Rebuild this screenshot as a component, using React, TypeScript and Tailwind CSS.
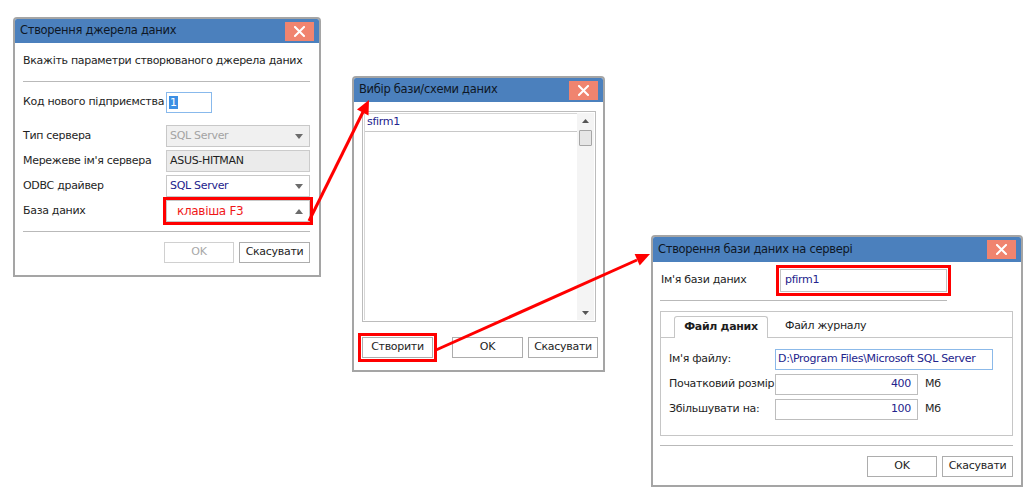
import React from "react"

interface WindowProps {
    className: string
    title: string
    titleHeight?: string
    children?: React.ReactNode
}

function CloseButton() {
    return (
        <div className="flex h-[19px] w-[29px] items-center justify-center bg-[#f0846f]">
            <svg width="11" height="11" viewBox="0 0 11 11">
                <path d="M1 1 L10 10 M10 1 L1 10" stroke="#ffffff" strokeWidth="2" strokeLinecap="square" />
            </svg>
        </div>
    )
}

function Window({ className, title, titleHeight = "h-[24px]", children }: WindowProps) {
    return (
        <div className={`absolute flex flex-col rounded-t-[4px] border-2 border-[#a5a5a5] bg-white ${className}`}>
            <div className={`flex ${titleHeight} items-center justify-between rounded-t-[2px] bg-[#4b80bd] pl-[5px] pr-[5px] text-[11.5px] text-[#0e1726]`}>
                <span>{title}</span>
                <CloseButton />
            </div>
            {children}
        </div>
    )
}

function Arrow({ dir }: { dir: "down" | "up" }) {
    return (
        <svg width="8" height="5" viewBox="0 0 8 5" className="shrink-0">
            {dir === "down"
                ? <path d="M0 0 H8 L4 5 Z" fill="#6b6b6b" />
                : <path d="M0 5 H8 L4 0 Z" fill="#6b6b6b" />}
        </svg>
    )
}

function Button({ label, disabled, width = "w-[71px]", className = "" }: { label: string, disabled?: boolean, width?: string, className?: string }) {
    return (
        <div className={`flex h-[21px] ${width} items-center justify-center border ${disabled ? "border-[#d0d0d0] text-[#a8a8a8]" : "border-[#adadad] text-[#1e1e1e]"} bg-white ${className}`}>
            {label}
        </div>
    )
}

function SourceDialog() {
    return (
        <Window className="left-[13px] top-[17px] h-[260px] w-[308px]" title="Створення джерела даних">
            <div className="flex flex-col pl-[8px] pr-[9px]">
                <div className="mt-[11px] whitespace-nowrap leading-[13px]">Вкажіть параметри створюваного джерела даних</div>
                <div className="mt-[14px] h-px bg-[#b9b9b9]" />
                <div className="mt-[10px] flex h-[21px] items-center">
                    <span className="w-[143px] whitespace-nowrap">Код нового підприємства</span>
                    <div className="flex h-[21px] w-[46px] items-center border border-[#88b9ec] pl-[2px]">
                        <span className="bg-[#3b8fe4] px-px leading-[13px] text-white">1</span>
                    </div>
                </div>
                <div className="mt-[12px] flex flex-col gap-[3px]">
                    <div className="flex h-[22px] items-center">
                        <span className="w-[143px]">Тип сервера</span>
                        <div className="flex h-[22px] flex-1 items-center justify-between border border-[#c8c8c8] bg-[#f0f0f0] pl-[3px] pr-[6px] text-[#a3a3a3]">
                            <span>SQL Server</span>
                            <Arrow dir="down" />
                        </div>
                    </div>
                    <div className="flex h-[22px] items-center">
                        <span className="w-[143px] whitespace-nowrap">Мережеве ім'я сервера</span>
                        <div className="flex h-[22px] flex-1 items-center border border-[#cbcbcb] bg-[#ebebeb] pl-[3px] text-[#1e1e1e]">
                            <span>ASUS-HITMAN</span>
                        </div>
                    </div>
                    <div className="flex h-[22px] items-center">
                        <span className="w-[143px]">ODBC драйвер</span>
                        <div className="flex h-[22px] flex-1 items-center justify-between border border-[#c8c8c8] bg-white pl-[3px] pr-[6px] text-[#23238c]">
                            <span>SQL Server</span>
                            <Arrow dir="down" />
                        </div>
                    </div>
                    <div className="flex h-[22px] items-center">
                        <span className="w-[143px]">База даних</span>
                        <div className="flex h-[22px] flex-1 items-center justify-between border border-[#c8c8c8] bg-white pl-[10px] pr-[6px] text-[12px] text-[#f01818] outline-[3px] outline-offset-0 outline-[#ff0000] outline-solid">
                            <span>клавіша F3</span>
                            <Arrow dir="up" />
                        </div>
                    </div>
                </div>
                <div className="mt-[9px] h-px bg-[#b9b9b9]" />
                <div className="mt-[10px] flex justify-end gap-[5px]">
                    <Button label="OK" disabled width="w-[70px]" />
                    <Button label="Скасувати" width="w-[71px]" />
                </div>
            </div>
        </Window>
    )
}

function SchemaDialog() {
    return (
        <Window className="left-[352px] top-[76px] h-[296px] w-[253px]" title="Вибір бази/схеми даних">
            <div className="ml-[8px] mr-[7px] mt-[9px] flex h-[211px] border border-[#bcbcbc] p-px">
                <div className="flex flex-1 flex-col border-l border-t border-[#d6d6d6]">
                    <div className="flex h-[18px] items-center border-b border-[#c8c8c8] pl-[2px] text-[#23238c]">sfirm1</div>
                </div>
                <div className="flex w-[17px] flex-col items-center justify-between bg-[#f4f4f4] pb-[5px] pt-[6px]">
                    <div className="flex flex-col items-center gap-[7px]">
                        <svg width="7" height="4" viewBox="0 0 7 4"><path d="M0 4 H7 L3.5 0 Z" fill="#555" /></svg>
                        <div className="h-[16px] w-[13px] rounded-[1px] border border-[#a6a6a6] bg-[#e6e6e6]" />
                    </div>
                    <svg width="7" height="4" viewBox="0 0 7 4"><path d="M0 0 H7 L3.5 4 Z" fill="#555" /></svg>
                </div>
            </div>
            <div className="mt-[15px] flex">
                <Button label="Створити" className="ml-[8px] outline-[3px] outline-offset-[1px] outline-[#ff0000] outline-solid" />
                <Button label="OK" className="ml-[19px]" />
                <Button label="Скасувати" width="w-[70px]" className="ml-[5px]" />
            </div>
        </Window>
    )
}

function ServerDialog() {
    return (
        <Window className="left-[651px] top-[235px] h-[252px] w-[372px]" title="Створення бази даних на сервері" titleHeight="h-[25px]">
            <div className="flex flex-col pl-[7px] pr-[8px]">
                <div className="mt-[7px] flex h-[23px] items-center">
                    <span className="w-[120px] pl-px">Ім'я бази даних</span>
                    <div className="flex h-[23px] w-[167px] items-center border border-[#c3c3c3] pl-[4px] text-[#23238c] outline-[3px] outline-offset-[1px] outline-[#ff0000] outline-solid">pfirm1</div>
                </div>
                <div className="mt-[8px] h-px w-[287px] bg-[#b9b9b9]" />
                <div className="mt-[10px] flex h-[125px] flex-col border border-[#c6c6c6]">
                    <div className="mt-[4px] flex h-[22px] items-end border-b border-[#c6c6c6]">
                        <div className="-mb-px ml-[13px] flex h-[22px] w-[94px] items-center justify-center rounded-t-[3px] border border-b-0 border-[#c6c6c6] bg-white font-bold">Файл даних</div>
                        <span className="mb-[3px] ml-[17px]">Файл журналу</span>
                    </div>
                    <div className="mt-[11px] flex flex-col gap-[4px] pl-[8px]">
                        <div className="flex h-[21px] items-center">
                            <span className="w-[106px] shrink-0 whitespace-nowrap">Ім'я файлу:</span>
                            <div className="flex h-[21px] w-[218px] items-center overflow-hidden whitespace-nowrap border border-[#8bb9e9] pl-[2px] text-[#23238c]">D:\Program Files\Microsoft SQL Server</div>
                        </div>
                        <div className="flex h-[21px] items-center">
                            <span className="w-[106px] shrink-0 whitespace-nowrap">Початковий розмір</span>
                            <div className="flex h-[21px] w-[143px] items-center justify-end border border-[#bdbdbd] bg-white pr-[6px] text-[#23238c]">400</div>
                            <span className="ml-[7px]">Мб</span>
                        </div>
                        <div className="flex h-[21px] items-center">
                            <span className="w-[106px] shrink-0 whitespace-nowrap">Збільшувати на:</span>
                            <div className="flex h-[21px] w-[143px] items-center justify-end border border-[#bdbdbd] pr-[6px] text-[#23238c]">100</div>
                            <span className="ml-[7px]">Мб</span>
                        </div>
                    </div>
                </div>
                <div className="mt-[9px] h-px bg-[#b9b9b9]" />
                <div className="mt-[10px] flex justify-end gap-[5px]">
                    <Button label="OK" width="w-[70px]" />
                    <Button label="Скасувати" width="w-[71px]" />
                </div>
            </div>
        </Window>
    )
}

export default function App() {
    return (
        <div className="relative h-[501px] w-[1036px] overflow-hidden bg-white font-['DejaVu_Sans',sans-serif] text-[11px] tracking-[-0.3px] text-[#1e1e1e]">
            <SourceDialog />
            <SchemaDialog />
            <ServerDialog />
            <svg className="pointer-events-none absolute left-0 top-0" width="1036" height="501" viewBox="0 0 1036 501">
                <line x1="309" y1="221" x2="363" y2="112" stroke="#ff0000" strokeWidth="3" />
                <polygon points="369,100 368.5,115.5 357,109.5" fill="#ff0000" />
                <line x1="436" y1="350" x2="637" y2="260" stroke="#ff0000" strokeWidth="3" />
                <polygon points="650,254 639.7,265.5 634.6,254" fill="#ff0000" />
            </svg>
        </div>
    )
}
